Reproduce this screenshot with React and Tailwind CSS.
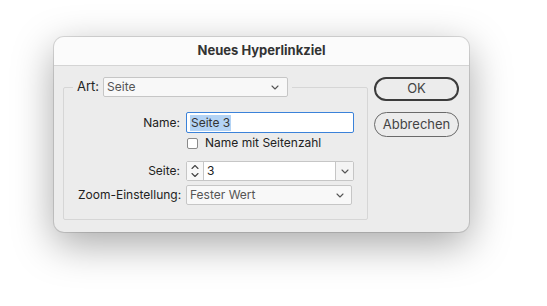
import React from 'react';

const font = { fontFamily: 'Inter, "Noto Sans", sans-serif' };

function Chevron({ className = '' }) {
  return (
    <svg width="8" height="5" viewBox="0 0 8 5" className={className}>
      <path d="M1 1 L4 4 L7 1" fill="none" stroke="#555" strokeWidth="1.1" strokeLinecap="round" strokeLinejoin="round" />
    </svg>
  );
}

function Stepper() {
  return (
    <svg width="8" height="14" viewBox="0 0 8 14">
      <path d="M1 4.5 L4 1.5 L7 4.5" fill="none" stroke="#444" strokeWidth="1.1" strokeLinecap="round" strokeLinejoin="round" />
      <path d="M1 9.5 L4 12.5 L7 9.5" fill="none" stroke="#444" strokeWidth="1.1" strokeLinecap="round" strokeLinejoin="round" />
    </svg>
  );
}

function App() {
  return (
    <div className="w-[547px] h-[306px] bg-white pl-[54px] pt-[37px] text-[12px] text-[#222]" style={font}>
      <div className="w-[415px] h-[195px] rounded-[10px] bg-[#ececec] shadow-[0_12px_40px_rgba(0,0,0,0.35),0_0_0_1px_rgba(0,0,0,0.12)] overflow-hidden">
        {/* Titelleiste */}
        <div className="h-[29px] bg-[#fbfbfb] border-b border-[#d4d4d4] flex items-center justify-center font-bold text-[13px] text-[#333]">
          Neues Hyperlinkziel
        </div>

        <div className="flex pl-[9px] pt-[11px]">
          {/* Gruppe */}
          <fieldset className="w-[305px] border border-[#d6d6d6] rounded-[2px]">
            <legend className="ml-[9px] px-[4px] flex items-center gap-[4px] text-[13px]">
              <span>Art:</span>
              <div className="w-[185px] h-[20px] bg-[#f8f8f8] border border-[#c6c6c6] rounded-[2px] flex items-center justify-between pl-[3px] pr-[8px] text-[#555] text-[12px]">
                <span>Seite</span>
                <Chevron />
              </div>
            </legend>

            <div className="grid grid-cols-[102px_168px] gap-x-[6px] items-center pt-[15px] pl-[14px] pr-[13px] pb-[14px] whitespace-nowrap">
              <div className="text-right">Name:</div>
              <div className="h-[21px] bg-white border border-[#3b82d9] rounded-[2px] flex items-center pl-[3px]">
                <span className="bg-[#b3d3f5] text-[#333] px-[1px] leading-[16px]">Seite 3</span>
              </div>

              <div />
              <div className="flex items-center gap-[7px] mt-[1px] pl-[1px]">
                <div className="w-[11px] h-[11px] bg-white border border-[#8a8a8a] rounded-[2px]" />
                <span>Name mit Seitenzahl</span>
              </div>

              <div className="text-right mt-[9px]">Seite:</div>
              <div className="h-[20px] mt-[9px] bg-white border border-[#c6c6c6] rounded-[2px] flex items-stretch">
                <div className="w-[17px] border-r border-[#c6c6c6] bg-[#f8f8f8] flex items-center justify-center">
                  <Stepper />
                </div>
                <div className="flex-1 flex items-center pl-[3px]">3</div>
                <div className="w-[18px] border-l border-[#c6c6c6] bg-[#f4f4f4] flex items-center justify-center">
                  <Chevron />
                </div>
              </div>

              <div className="text-right mt-[4px]">Zoom-Einstellung:</div>
              <div className="w-[166px] h-[20px] mt-[4px] bg-[#f8f8f8] border border-[#c6c6c6] rounded-[2px] flex items-center justify-between pl-[3px] pr-[7px] text-[#555]">
                <span>Fester Wert</span>
                <Chevron />
              </div>
            </div>
          </fieldset>

          {/* Schaltflächen */}
          <div className="ml-[6px] flex flex-col gap-[11px]">
            <button className="w-[85px] h-[24px] rounded-full border-2 border-[#3c3c3c] bg-[#ececec] text-[#444] text-[13px] flex items-center justify-center">
              OK
            </button>
            <button className="w-[85px] h-[25px] rounded-full border border-[#6a6a6a] bg-[#ececec] text-[#444] text-[13px] flex items-center justify-center">
              Abbrechen
            </button>
          </div>
        </div>
      </div>
    </div>
  );
}

export default App;
